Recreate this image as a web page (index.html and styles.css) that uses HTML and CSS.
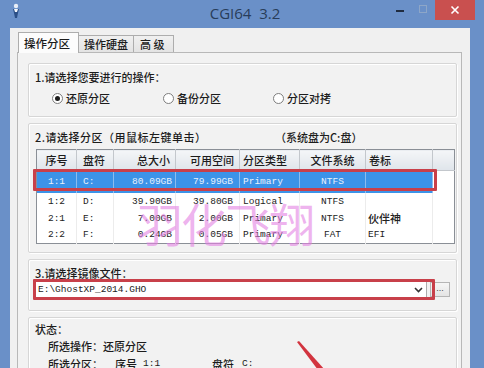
FILE: index.html
```html
<html>
<head>
	<meta charset="utf-8">
	<title>CGI64 3.2</title>
	<link rel="stylesheet" href="styles.css">
</head>
<body>
	<div class="window">
		<div class="titlebar">
			<div class="appIcon">
				<svg width="10" height="16" viewBox="0 0 10 16">
					<circle cx="5" cy="3" r="2.2" fill="#e8eef7"/>
					<path d="M2 6 L8 6 L7 10 L6 15 L4 15 L3 10 Z" fill="#2b4f86"/>
					<path d="M3 6 L7 6 L6 9 L4 9 Z" fill="#f2f5fa"/>
				</svg>
			</div>
			<div class="title">CGI64&nbsp;&nbsp;3.2</div>
			<div class="controls">
				<span class="btnMin"></span>
				<span class="btnMax"></span>
				<span class="btnClose">
					<svg width="10" height="10" viewBox="0 0 10 10"><path d="M1.5 1.5 L8.5 8.5 M8.5 1.5 L1.5 8.5" stroke="#fff" stroke-width="1.6"/></svg>
				</span>
			</div>
		</div>
		<div class="client">
			<ul class="tabs">
				<li class="current">操作分区</li>
				<li>操作硬盘</li>
				<li>高 级</li>
			</ul>
			<div class="panel">
				<div class="group g1">
					<p class="label">1.请选择您要进行的操作：</p>
					<div class="radios">
						<label><i class="radio checked"></i>还原分区</label>
						<label><i class="radio"></i>备份分区</label>
						<label><i class="radio"></i>分区对拷</label>
					</div>
				</div>
				<div class="group g2">
					<p class="label"><span class="lead">2.请选择分区（用鼠标左键单击）</span><span>（系统盘为C:盘）</span></p>
					<div class="tableWrap">
						<table class="parts">
							<tr class="head">
								<th class="c1">序号</th>
								<th class="c2">盘符</th>
								<th class="c3">总大小</th>
								<th class="c4">可用空间</th>
								<th class="c5">分区类型</th>
								<th class="c6">文件系统</th>
								<th class="c7">卷标</th>
								<th class="c8"></th>
							</tr>
							<tr class="sel">
								<td class="c1">1:1</td>
								<td class="c2">C:</td>
								<td class="c3">80.09GB</td>
								<td class="c4">79.99GB</td>
								<td class="c5">Primary</td>
								<td class="c6">NTFS</td>
								<td class="c7"></td>
								<td class="c8"></td>
							</tr>
							<tr>
								<td class="c1">1:2</td>
								<td class="c2">D:</td>
								<td class="c3">39.90GB</td>
								<td class="c4">39.80GB</td>
								<td class="c5">Logical</td>
								<td class="c6">NTFS</td>
								<td class="c7"></td>
								<td class="c8"></td>
							</tr>
							<tr>
								<td class="c1">2:1</td>
								<td class="c2">E:</td>
								<td class="c3">7.00GB</td>
								<td class="c4">2.00GB</td>
								<td class="c5">Primary</td>
								<td class="c6">NTFS</td>
								<td class="c7 cjk">伙伴神</td>
								<td class="c8"></td>
							</tr>
							<tr>
								<td class="c1">2:2</td>
								<td class="c2">F:</td>
								<td class="c3">0.24GB</td>
								<td class="c4">0.05GB</td>
								<td class="c5">Primary</td>
								<td class="c6">FAT</td>
								<td class="c7">EFI</td>
								<td class="c8"></td>
							</tr>
						</table>
						<div class="mark rowMark"></div>
					</div>
				</div>
				<div class="group g3">
					<p class="label">3.请选择镜像文件：</p>
					<div class="fileRow">
						<div class="combo">
							<span>E:\GhostXP_2014.GHO</span>
							<svg width="9" height="6" viewBox="0 0 9 6"><path d="M1 1 L4.5 4.5 L8 1" fill="none" stroke="#333" stroke-width="1.6"/></svg>
						</div>
						<span class="browse">...</span>
						<div class="mark comboMark"></div>
					</div>
				</div>
				<div class="group status">
					<p>状态：</p>
					<p class="indent">所选操作：还原分区</p>
					<p class="indent"><span class="w1">所选分区：</span><span class="w2">序号</span><span class="w3 mono">1:1</span><span class="w4">盘符</span><span class="mono">C:</span></p>
				</div>
				<div class="watermark">羽化飞翔</div>
			</div>
		</div>
		<svg class="arrow" width="40" height="34" viewBox="0 0 40 34">
			<path d="M6 6 L8 5 L34 34 L27 34 Z" fill="#d2343f"/>
		</svg>
	</div>
</body>
</html>
```

FILE: styles.css
```css
*{
	box-sizing: border-box;
}
body, html, div, p, ul, li, table{
	padding: 0; margin: 0;
}
body{
	width: 484px;
	height: 368px;
	overflow: hidden;
	color: #1c1c1c;
	font: 500 11px/16px "Noto Sans CJK SC", sans-serif;
}
.window{
	position: relative;
	width: 484px;
	height: 368px;
	background: #6a90c8;
	display: flex;
	flex-direction: column;
}
.titlebar{
	height: 28px;
	display: grid;
	grid-template-columns: 1fr auto 1fr;
	flex-shrink: 0;
}
.appIcon{
	padding: 3px 0 0 11px;
}
.title{
	font: 15px/26px "Open Sans", "Liberation Sans", sans-serif;
	color: #283d5a;
	padding-left: 6px;
}
.controls{
	display: flex;
	justify-content: flex-end;
	align-items: flex-start;
	padding-right: 9px;
}
.btnMin{
	width: 8px;
	height: 2px;
	background: #1f2c40;
	margin: 10px 15px 0 0;
}
.btnMax{
	width: 8px;
	height: 8px;
	border: 1px solid #8da6c8;
	margin: 5px 8px 0 0;
}
.btnClose{
	width: 40px;
	height: 20px;
	background: #c9504f;
	display: flex;
	align-items: center;
	justify-content: center;
}
.client{
	flex: 1;
	width: 460px;
	margin-left: 10px;
	background: #f0f0f0;
	padding: 4px 8px 0 7px;
	overflow: hidden;
}
.tabs{
	list-style: none;
	display: flex;
	align-items: flex-end;
	height: 20px;
	padding-left: 1px;
	position: relative;
	z-index: 1;
}
.tabs li{
	height: 17px;
	line-height: 16px;
	border: 1px solid #adadad;
	border-bottom: 0 none;
	border-left: 0 none;
	background: linear-gradient(#f0f0f0, #e3e3e3);
	padding: 0 5px;
}
.tabs li.current{
	height: 21px;
	line-height: 20px;
	margin-bottom: -1px;
	border-left: 1px solid #adadad;
	background: #fcfcfc;
	padding: 0 8px 0 5px;
	font-size: 11.5px;
}
.tabs li:last-child{
	padding: 0 9px 0 6px;
}
.panel{
	position: relative;
	border: 1px solid #b8b8b8;
	background: #f2f2f2;
	padding: 10px 4px 0 10px;
	height: 400px;
}
.group{
	border: 1px solid #d6d6d6;
	border-radius: 2px;
	box-shadow: inset 1px 1px 0 #fff, 1px 1px 0 #fff;
	padding: 5px 6px 0;
	margin-bottom: 6px;
}
.g1{
	height: 54px;
}
.radios{
	display: flex;
	margin-top: 6px;
	padding-left: 17px;
}
.radios label{
	display: flex;
	align-items: center;
	width: 111px;
	line-height: 14px;
}
.radios label:nth-child(2){
	width: 110px;
}
.radio{
	width: 11px;
	height: 11px;
	border: 1px solid #7e7e7e;
	border-radius: 50%;
	background: #fff;
	margin-right: 3px;
	position: relative;
}
.radio.checked:after{
	content: "";
	position: absolute;
	left: 2px;
	top: 2px;
	width: 5px;
	height: 5px;
	border-radius: 50%;
	background: #1c1c1c;
}
.g2{
	height: 130px;
}
.g2 .label{
	display: flex;
}
.g2 .lead{
	width: 240px;
	letter-spacing: 0.5px;
}
.tableWrap{
	position: relative;
	margin: 4px 0 0 1px;
}
.parts{
	border-collapse: collapse;
	border: 1px solid #8a8f96;
	background: #fff;
	width: 418px;
	table-layout: fixed;
	font: 9.5px "Liberation Mono", monospace;
	color: #222;
}
.parts th{
	height: 21px;
	padding: 0;
	font: 500 11px "Noto Sans CJK SC", sans-serif;
	background: linear-gradient(#f4f6f8, #dfe4ea);
	border-right: 1px solid #c3c7cc;
	border-bottom: 1px solid #c3c7cc;
	color: #1c1c1c;
}
.parts td{
	height: 17px;
	padding: 0;
	border-right: 1px solid #ececec;
	white-space: nowrap;
	overflow: hidden;
}
.parts tr.sel td{
	height: 22px;
	background: #3c93e8;
	color: #e8f1fb;
	border-right-color: #8cbcf0;
}
.parts tr.sel td.c8{
	background: #fff;
}
.parts .c1{ width: 40px; text-align: center; }
.parts .c2{ width: 37px; text-align: left; padding-left: 6px; }
.parts .c3{ width: 62px; text-align: right; padding-right: 3px; }
.parts .c4{ width: 64px; text-align: right; padding-right: 6px; }
.parts .c5{ width: 60px; text-align: left; padding-left: 3px; }
.parts .c6{ width: 66px; text-align: center; }
.parts .c7{ width: 67px; text-align: left; padding-left: 2px; }
.parts .c8{ width: 22px; border-right: 0 none; }
.parts th.c3, .parts th.c4{ padding-right: 5px; }
.parts th.c7{ padding-left: 3px; }
.parts .cjk{
	font: 500 11px "Noto Sans CJK SC", sans-serif;
}
.mark{
	position: absolute;
	border: 3px solid #c8404a;
	border-radius: 1px;
}
.rowMark{
	left: -3px;
	top: 20px;
	width: 404px;
	height: 22px;
}
.g3{
	height: 52px;
}
.fileRow{
	position: relative;
	display: flex;
	align-items: center;
	height: 17px;
}
.combo{
	width: 397px;
	height: 17px;
	border: 1px solid #acacac;
	background: #fff;
	display: flex;
	align-items: center;
	justify-content: space-between;
	padding: 0 3px 0 2px;
	font: 9.5px "Liberation Mono", monospace;
	color: #222;
}
.browse{
	margin-left: 3px;
	width: 20px;
	height: 15px;
	border: 1px solid #b5b5b5;
	background: linear-gradient(#f6f6f6, #e4e4e4);
	font: 9px/11px "Liberation Sans", sans-serif;
	text-align: center;
	color: #444;
}
.comboMark{
	left: -2px;
	top: -2px;
	width: 402px;
	height: 21px;
}
.status{
	height: 80px;
	line-height: 18px;
	padding-top: 3px;
}
.status p:first-child{
	line-height: 16px;
	margin-bottom: 0;
}
.indent{
	padding-left: 13px;
	display: flex;
}
.status .w1{ width: 67px; }
.status .w2{ width: 28px; }
.status .w3{ width: 69px; }
.status .w4{ width: 30px; }
.mono{
	font: 9.5px/18px "Liberation Mono", monospace;
}
.watermark{
	position: absolute;
	left: 119px;
	top: 140px;
	font: 400 46px/58px "Noto Sans CJK SC", sans-serif;
	color: rgba(228, 130, 228, 0.62);
	letter-spacing: -2px;
	pointer-events: none;
}
.arrow{
	position: absolute;
	left: 291px;
	top: 336px;
}
```
